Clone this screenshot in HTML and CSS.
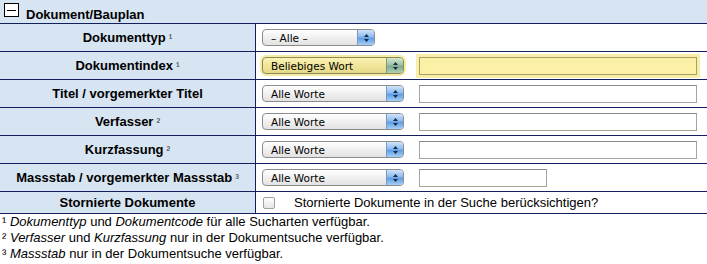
FILE: index.html
```html
<!DOCTYPE html>
<html lang="de">
<head>
<meta charset="utf-8">
<title>Dokument/Bauplan</title>
<link rel="stylesheet" href="styles.css">
</head>
<body>
<div class="panel">
  <div class="panel-head">
    <span class="toggle"><span class="toggle-bar"></span></span>
    <span class="panel-title">Dokument/Bauplan</span>
  </div>

  <div class="row">
    <div class="label">Dokumenttyp <span class="fn">¹</span></div>
    <div class="value">
      <span class="sel sel-short"><span class="sel-text">– Alle –</span><span class="sel-btn"><svg width="7" height="10" viewBox="0 0 7 10"><path d="M3.5 1 L6 4 L1 4 Z M3.5 9 L6 6 L1 6 Z" fill="#1b2a44"/></svg></span></span>
    </div>
  </div>

  <div class="row">
    <div class="label">Dokumentindex <span class="fn">¹</span></div>
    <div class="value">
      <span class="sel sel-hl"><span class="sel-text">Beliebiges Wort</span><span class="sel-btn"><svg width="7" height="10" viewBox="0 0 7 10"><path d="M3.5 1 L6 4 L1 4 Z M3.5 9 L6 6 L1 6 Z" fill="#1b2a44"/></svg></span></span>
      <span class="inp inp-hl"></span>
    </div>
  </div>

  <div class="row">
    <div class="label">Titel / vorgemerkter Titel</div>
    <div class="value">
      <span class="sel"><span class="sel-text">Alle Worte</span><span class="sel-btn"><svg width="7" height="10" viewBox="0 0 7 10"><path d="M3.5 1 L6 4 L1 4 Z M3.5 9 L6 6 L1 6 Z" fill="#1b2a44"/></svg></span></span>
      <span class="inp"></span>
    </div>
  </div>

  <div class="row">
    <div class="label">Verfasser <span class="fn">²</span></div>
    <div class="value">
      <span class="sel"><span class="sel-text">Alle Worte</span><span class="sel-btn"><svg width="7" height="10" viewBox="0 0 7 10"><path d="M3.5 1 L6 4 L1 4 Z M3.5 9 L6 6 L1 6 Z" fill="#1b2a44"/></svg></span></span>
      <span class="inp"></span>
    </div>
  </div>

  <div class="row">
    <div class="label">Kurzfassung <span class="fn">²</span></div>
    <div class="value">
      <span class="sel"><span class="sel-text">Alle Worte</span><span class="sel-btn"><svg width="7" height="10" viewBox="0 0 7 10"><path d="M3.5 1 L6 4 L1 4 Z M3.5 9 L6 6 L1 6 Z" fill="#1b2a44"/></svg></span></span>
      <span class="inp"></span>
    </div>
  </div>

  <div class="row">
    <div class="label">Massstab / vorgemerkter Massstab <span class="fn">³</span></div>
    <div class="value">
      <span class="sel"><span class="sel-text">Alle Worte</span><span class="sel-btn"><svg width="7" height="10" viewBox="0 0 7 10"><path d="M3.5 1 L6 4 L1 4 Z M3.5 9 L6 6 L1 6 Z" fill="#1b2a44"/></svg></span></span>
      <span class="inp inp-short"></span>
    </div>
  </div>

  <div class="row row-last">
    <div class="label">Stornierte Dokumente</div>
    <div class="value">
      <span class="chk"></span>
      <span class="chk-text">Stornierte Dokumente in der Suche berücksichtigen?</span>
    </div>
  </div>
</div>

<div class="notes">
  <div>¹ <em>Dokumenttyp</em> und <em>Dokumentcode</em> für alle Sucharten verfügbar.</div>
  <div>² <em>Verfasser</em> und <em>Kurzfassung</em> nur in der Dokumentsuche verfügbar.</div>
  <div>³ <em>Massstab</em> nur in der Dokumentsuche verfügbar.</div>
</div>
</body>
</html>
```
FILE: styles.css
```css
* { box-sizing: border-box; }
body {
  margin: 0;
  font-family: "Liberation Sans", Arial, sans-serif;
  font-size: 13px;
  color: #000;
  background: #fff;
}
.panel-head {
  height: 24px;
  background: #d7e4f2;
  border-bottom: 1px solid #13205c;
  display: flex;
  align-items: center;
  padding-left: 4px;
}
.toggle {
  width: 15px;
  height: 14px;
  border: 1px solid #000;
  background: #fff;
  display: flex;
  align-items: center;
  justify-content: center;
  margin-top: -3px;
}
.toggle-bar {
  width: 9px;
  height: 1px;
  background: #000;
}
.panel-title {
  font-weight: bold;
  margin-left: 7px;
  margin-top: 5px;
}
.row {
  display: flex;
  height: 28px;
  border-bottom: 1px solid #13205c;
}
.row-last { height: 22px; }
.label {
  width: 256px;
  flex: none;
  background: #d7e4f2;
  border-right: 1px solid #13205c;
  font-weight: bold;
  display: flex;
  align-items: center;
  justify-content: center;
}
.fn {
  font-weight: normal;
  font-size: 11px;
  color: #333;
  margin-left: 3px;
}
.value {
  flex: 1;
  display: flex;
  align-items: center;
  padding-left: 6px;
  gap: 15px;
}
.sel {
  width: 142px;
  height: 17px;
  border: 1px solid #8c8c8c;
  border-radius: 4px;
  background: linear-gradient(#ffffff, #f0f0f0 50%, #e2e2e2);
  display: flex;
  align-items: center;
  overflow: hidden;
  font-family: "DejaVu Sans", sans-serif;
  font-size: 10.5px;
}
.sel-short { width: 113px; }
.sel-text {
  flex: 1;
  padding-left: 8px;
  white-space: nowrap;
}
.sel-btn {
  width: 17px;
  height: 100%;
  flex: none;
  background: linear-gradient(#cfe3fa, #8ebcef 45%, #5d9de6 55%, #a6d0f7);
  border-left: 1px solid #7a98c0;
  display: flex;
  align-items: center;
  justify-content: center;
}
.sel-hl {
  background: linear-gradient(#fbf3b6, #f1e59a 50%, #e6d98b);
  border-color: #8d8657;
  box-shadow: 0 0 0 2px #f6eda4;
}
.sel-hl .sel-btn {
  background: linear-gradient(#d2e6cc, #9fc4a6 45%, #7eaa8d 55%, #b4d2b4);
  border-left-color: #7c9a7c;
}
.inp {
  width: 278px;
  height: 18px;
  border: 1px solid #a4a4a4;
  border-top-color: #8a8a8a;
  background: #fff;
}
.inp-short { width: 128px; }
.inp-hl {
  background: #fcefa6;
  border-color: #a89f62;
  box-shadow: 0 0 0 3px #f8eeaa;
}
.chk {
  width: 12px;
  height: 12px;
  border: 1px solid #a0a0a0;
  border-radius: 2px;
  background: linear-gradient(#ffffff, #e6e6e6);
  margin-left: 1px;
  flex: none;
}
.value .chk-text {
  font-size: 13px;
  margin-left: 4px;
}
.notes {
  padding-left: 2px;
  line-height: 16px;
  font-size: 13px;
}
```
